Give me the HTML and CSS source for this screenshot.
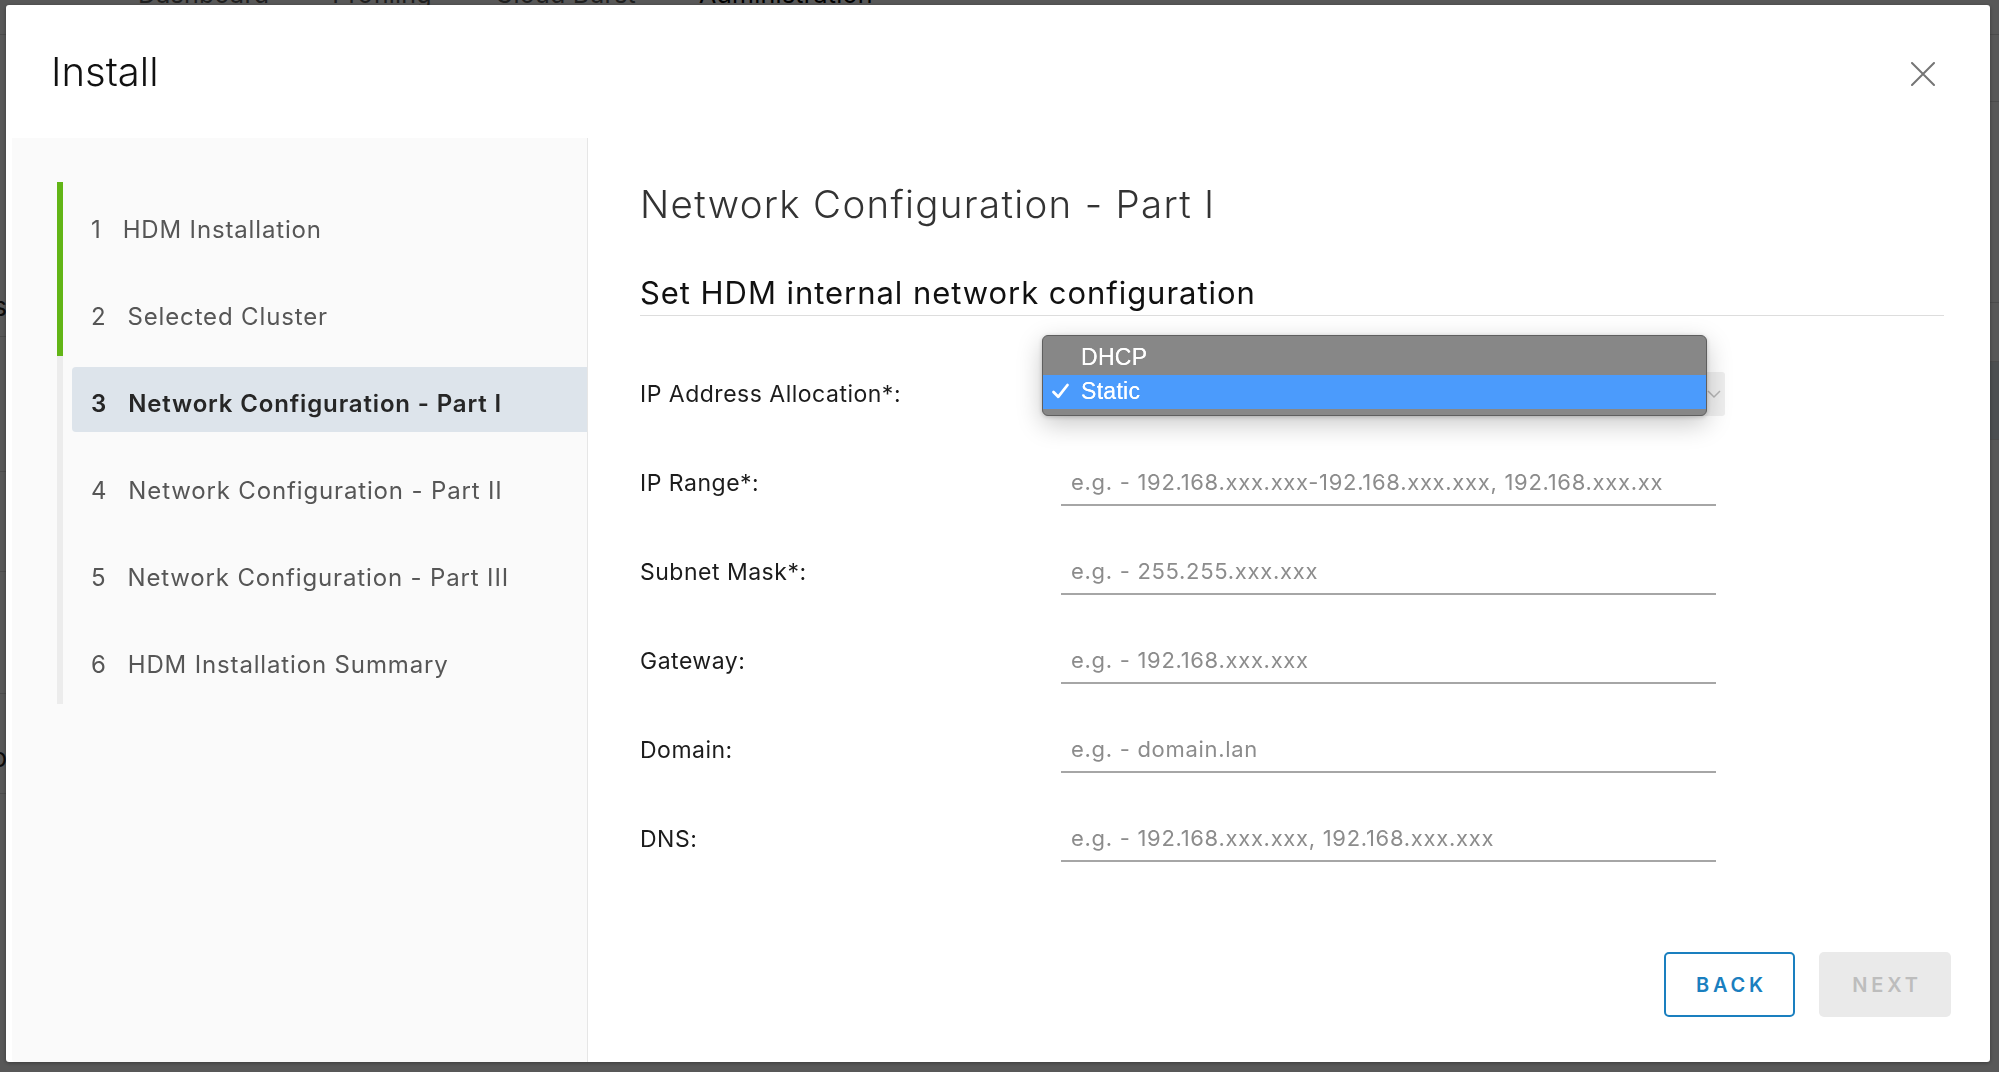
FILE: index.html
```html
<!DOCTYPE html>
<html lang="en">
<head>
<meta charset="utf-8">
<title>Install</title>
<link rel="stylesheet" href="styles.css">
</head>
<body>
<div class="page">
  <nav class="nav">
    <span class="tab">Dashboard</span>
    <span class="tab">Profiling</span>
    <span class="tab">Cloud Burst</span>
    <span class="tab tab-active">Administration</span>
  </nav>
  <div class="page-body">
    <div class="page-left">
      <div class="prow prow-a"><span>Hosts</span></div>
      <div class="prow prow-b"></div>
      <div class="prow prow-c"></div>
      <div class="prow prow-d"></div>
      <div class="prow prow-e"><span>Info</span></div>
    </div>
    <div class="page-right">
      <div class="prow prow-r1"></div>
      <div class="prow prow-r2"></div>
      <div class="prow prow-r3"></div>
      <div class="prow prow-r4"></div>
    </div>
  </div>
</div>
<div class="backdrop"></div>
<div class="modal">
  <header class="modal-header">
    <h1 class="modal-title">Install</h1>
    <button class="close" type="button" aria-label="Close">
      <svg width="24" height="24" viewBox="0 0 24 24"><path d="M1 1 L23 23 M23 1 L1 23" stroke="#757575" stroke-width="2" stroke-linecap="round" fill="none"/></svg>
    </button>
  </header>
  <div class="modal-body">
    <aside class="steps">
      <ol class="step-list">
        <li class="step done"><div class="step-inner"><span class="num">1</span>HDM Installation</div></li>
        <li class="step done"><div class="step-inner"><span class="num">2</span>Selected Cluster</div></li>
        <li class="step active"><div class="step-inner"><span class="num">3</span>Network Configuration - Part I</div></li>
        <li class="step"><div class="step-inner"><span class="num">4</span>Network Configuration - Part II</div></li>
        <li class="step"><div class="step-inner"><span class="num">5</span>Network Configuration - Part III</div></li>
        <li class="step"><div class="step-inner"><span class="num">6</span>HDM Installation Summary</div></li>
      </ol>
    </aside>
    <section class="content">
      <h2 class="page-title">Network Configuration - Part I</h2>
      <h3 class="section-title">Set HDM internal network configuration</h3>
      <div class="form">
        <label class="label">IP Address Allocation*:</label>
        <div class="select">
          <svg class="chev" width="14" height="10" viewBox="0 0 14 10"><path d="M1 2 L7 8 L13 2" stroke="#b5b5b5" stroke-width="1.5" fill="none"/></svg>
          <div class="popup">
            <div class="opt">DHCP</div>
            <div class="opt opt-sel">
              <svg class="check" width="19" height="19" viewBox="0 0 19 19"><path d="M2.5 10 L7.2 14.8 L16.5 3" stroke="#fff" stroke-width="2.8" fill="none" stroke-linecap="round" stroke-linejoin="round"/></svg>
              Static
            </div>
          </div>
        </div>

        <label class="label">IP Range*:</label>
        <input class="input" type="text" placeholder="e.g. - 192.168.xxx.xxx-192.168.xxx.xxx, 192.168.xxx.xx">

        <label class="label">Subnet Mask*:</label>
        <input class="input" type="text" placeholder="e.g. - 255.255.xxx.xxx">

        <label class="label">Gateway:</label>
        <input class="input" type="text" placeholder="e.g. - 192.168.xxx.xxx">

        <label class="label">Domain:</label>
        <input class="input" type="text" placeholder="e.g. - domain.lan">

        <label class="label">DNS:</label>
        <input class="input" type="text" placeholder="e.g. - 192.168.xxx.xxx, 192.168.xxx.xxx">
      </div>
      <div class="footer">
        <button class="btn btn-back" type="button">BACK</button>
        <button class="btn btn-next" type="button" disabled>NEXT</button>
      </div>
    </section>
  </div>
</div>
</body>
</html>
```

FILE: styles.css
```css
* { box-sizing: border-box; }
html, body { margin: 0; padding: 0; }
body {
  width: 1999px;
  height: 1072px;
  overflow: hidden;
  background: #ffffff;
  font-family: Inter, Lato, "Open Sans", sans-serif;
}

/* page behind the modal */
.page { height: 1072px; overflow: hidden; }
.nav {
  height: 35px;
  display: flex;
  gap: 63px;
  padding-left: 138px;
  border-bottom: 1px solid #dcdcdc;
}
.tab {
  font-size: 25px;
  letter-spacing: 0.25px;
  line-height: 26px;
  margin-top: -19px;
  color: #5a5a5a;
  white-space: nowrap;
}
.tab-active { color: #000; }
.page-body { display: flex; justify-content: space-between; }
.page-left { width: 7px; overflow: hidden; }
.page-right { width: 12px; overflow: hidden; }
.prow {
  display: flex;
  justify-content: flex-end;
  align-items: flex-end;
  border-bottom: 1px solid #dddddd;
  font-size: 26px;
  color: #222;
  white-space: nowrap;
}
.prow-a { height: 302px; padding-bottom: 14px; }
.prow-b { height: 135px; }
.prow-c { height: 100px; }
.prow-d { height: 122px; }
.prow-e { height: 100px; padding-bottom: 20px; }
.prow-r1 { height: 67px; }
.prow-r2 { height: 201px; }
.prow-r3 { height: 59px; }
.prow-r4 { height: 78px; background: #dbe4ea; }

.backdrop {
  position: fixed;
  inset: 0;
  background: rgba(0, 0, 0, 0.655);
}

/* modal */
.modal {
  position: fixed;
  left: 6px;
  top: 5px;
  width: 1984px;
  height: 1057px;
  background: #ffffff;
  border-radius: 3px;
  display: flex;
  flex-direction: column;
  box-shadow: 0 1px 4px rgba(0, 0, 0, 0.35);
}
.modal-header {
  height: 133px;
  flex: none;
  display: flex;
  align-items: center;
  justify-content: space-between;
  padding: 0 55px 0 45px;
}
.modal-title {
  margin: 0;
  font-size: 40px;
  line-height: 48px;
  font-weight: 300;
  color: #111;
}
.close {
  width: 24px;
  height: 24px;
  padding: 0;
  border: 0;
  background: none;
  margin-top: 5px;
  display: block;
}
.close svg { display: block; }

.modal-body { flex: 1; display: flex; min-height: 0; }

/* steps sidebar */
.steps {
  width: 576px;
  flex: none;
  margin-left: 6px;
  background: #fafafa;
  border-right: 1px solid #e6e6e6;
  padding: 44px 0 0 45px;
  border-bottom-left-radius: 3px;
}
.step-list { list-style: none; margin: 0; padding: 0; }
.step {
  height: 87px;
  border-left: 6px solid #ececec;
  padding-top: 11px;
}
.step.done { border-left-color: #62b516; }
.step-inner {
  margin-left: 9px;
  height: 65px;
  display: flex;
  align-items: center;
  padding: 7px 0 0 19px;
  font-size: 24px;
  letter-spacing: 0.85px;
  color: #565656;
  white-space: nowrap;
}
.step.active .step-inner {
  background: #dde4eb;
  border-radius: 4px 0 0 4px;
  color: #262626;
  font-weight: 600;
}
.num { margin-right: 21px; }

/* content */
.content {
  flex: 1;
  display: flex;
  flex-direction: column;
  padding: 42px 46px 45px 52px;
}
.page-title {
  margin: 0;
  font-size: 38.5px;
  letter-spacing: 1.3px;
  line-height: 48px;
  font-weight: 300;
  color: #333;
}
.section-title {
  margin: 45px 0 0;
  font-size: 31px;
  letter-spacing: 0.95px;
  line-height: 40px;
  font-weight: 400;
  color: #111;
  padding-bottom: 2px;
  border-bottom: 1px solid #dddddd;
}
.form {
  margin-top: 33px;
  display: grid;
  grid-template-columns: 421px 664px;
  grid-auto-rows: 89px;
  align-items: center;
}
.label {
  font-size: 23px;
  letter-spacing: 0.5px;
  color: #1c1c1c;
}
.input {
  width: 655px;
  height: 46px;
  border: 0;
  border-bottom: 2px solid #a6a6a6;
  background: transparent;
  padding: 0 0 0 10px;
  font-family: Inter, Lato, sans-serif;
  font-size: 22px;
  letter-spacing: 0.7px;
  color: #333;
  outline: none;
}
.input::placeholder { color: #8c8c8c; }

.select {
  position: relative;
  width: 664px;
  height: 44px;
  background: #efefef;
  border-radius: 3px;
}
.chev { position: absolute; right: 4px; top: 17px; }
.popup {
  position: absolute;
  left: -19px;
  top: -37px;
  width: 665px;
  height: 81px;
  background: #878787;
  border: 1px solid #5f5f5f;
  border-radius: 6px;
  padding: 5px 0 6px;
  box-shadow: 0 8px 26px rgba(0, 0, 0, 0.22), 0 1px 4px rgba(0, 0, 0, 0.2);
  font-family: "Liberation Sans", Arial, sans-serif;
  font-size: 23px;
  letter-spacing: 0.3px;
  color: #ffffff;
}
.opt {
  position: relative;
  height: 34px;
  display: flex;
  align-items: center;
  padding-left: 38px;
  text-shadow: 0 0 0.6px #ffffff;
}
.opt-sel { background: #4b9bfc; }
.check { position: absolute; left: 8px; top: 7px; }

.footer {
  margin-top: auto;
  margin-right: -7px;
  display: flex;
  justify-content: flex-end;
  gap: 24px;
}
.btn {
  height: 65px;
  border-radius: 5px;
  font-family: Inter, Lato, sans-serif;
  font-size: 20px;
  font-weight: 600;
  letter-spacing: 3.8px;
  padding: 0 0 0 4px;
}
.btn-back {
  width: 131px;
  background: #ffffff;
  border: 2px solid #1a7fbf;
  color: #1a7fbf;
}
.btn-next {
  width: 132px;
  background: #eaeaea;
  border: 0;
  color: #bdbdbd;
}
```
